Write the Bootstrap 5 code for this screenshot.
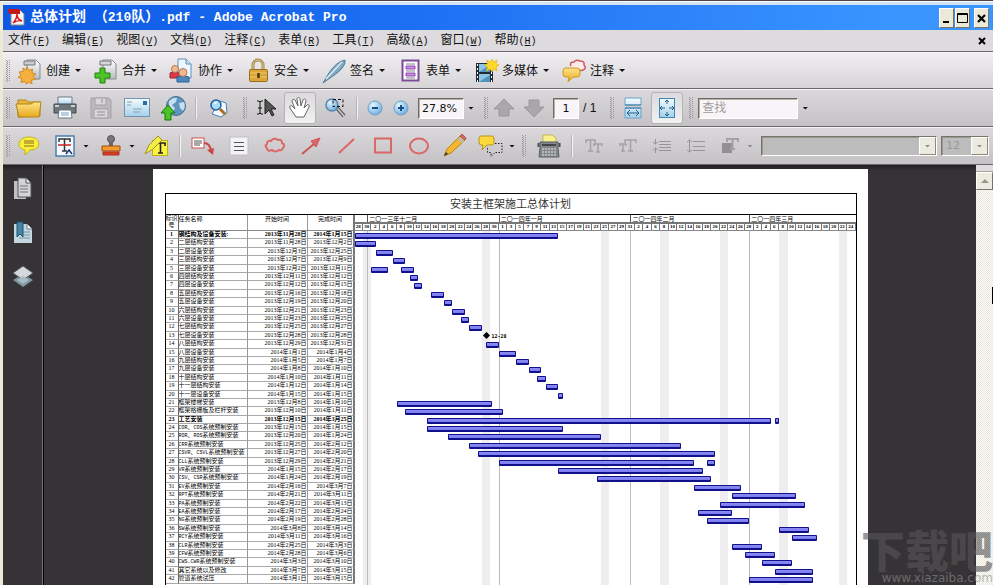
<!DOCTYPE html>
<html lang="zh-CN">
<head>
<meta charset="utf-8">
<meta name="viewport" content="width=device-width, initial-scale=1">
<title>总体计划 （210队）.pdf - Adobe Acrobat Pro</title>
<link href="https://cdn.jsdelivr.net/npm/bootstrap@5.3.0/dist/css/bootstrap.min.css" rel="stylesheet">
<style>
body{font:12px/16px "Liberation Sans","Noto Sans CJK SC",sans-serif;color:#111;background:#ece9d8;border-top:1px solid #4a4646}
button{font:inherit;color:inherit;background:none;border:0;padding:0}
svg{display:block;flex:none}
.frame{border-left:3px solid #ece9d8;border-top:1px solid #fff}
.frame>*{flex-shrink:0}
.titlebar{height:28px;border-top:3px solid #d5e3f6;background:linear-gradient(90deg,#0c58e4,#1f72f4 45%,#3a95ff 90%) padding-box;color:#fff;font:bold 13px/25px "Liberation Mono","Noto Sans CJK SC",monospace}
.titlebar h1{font:inherit;margin:0}
.zh{font-size:14px}
.winbtn{width:15px;height:20px;background:#ece9d8;border:1px solid;border-color:#fff #77745f #77745f #fff;display:grid;place-items:center}
.winbtn-pair{gap:1px}
.menus{height:22px;background:#dddbde;border-bottom:1px solid #6a686a;padding:0 5px}
.menus .hot{font:10px/16px "Liberation Mono",monospace}
.tb{background:linear-gradient(#dad8da,#c4c2c5);border-top:1px solid #f6f5f6;border-bottom:1px solid #69676a;height:38px;display:flex;align-items:center}
.tb-light{background:linear-gradient(#f0eef0,#d6d4d7);height:37px}
.tb>*{flex:none}
.grip{width:8px;height:22px;background:repeating-linear-gradient(#98969a 0 1px,transparent 1px 2px) 3px 0/1px 100% no-repeat,repeating-linear-gradient(transparent 0 1px,#98969a 1px 2px) 4px 0/1px 100% no-repeat,repeating-linear-gradient(#98969a 0 1px,transparent 1px 2px) 6px 0/1px 100% no-repeat}
.grip-mid{margin-left:3px}
.div-line{width:10px;height:22px;background:linear-gradient(90deg,#f4f3f4,#f4f3f4) 5px 0/1px 100% no-repeat,linear-gradient(90deg,#b5b3b6,#b5b3b6) 4px 0/1px 100% no-repeat}
.tasks{padding-right:12px}
.tasks .grip{margin-right:6px}
.task{display:flex;align-items:center;margin-right:12px}
.task span{margin:0 5px 0 3px}
.tool{width:36px;height:32px;display:grid;place-items:center}
.tool-sm{width:26px}.tool-md{width:32px}.tool-lg{width:34px}.tool-nav{width:30px}
.pressed{background:linear-gradient(#dcdadc,#f2f1f2);border:1px solid #b4b2b5;border-radius:3px}
.car{width:6px;height:3px;background:#111;clip-path:polygon(0 0,100% 0,50% 100%)}
.sunk{background:#f7f5f8;border:1px solid;border-color:#6d6a60 #fff #fff #6d6a60;box-shadow:inset 1px 1px #b5b3ac;height:21px;border-radius:0;padding:0 3px;font:12px/18px "DejaVu Sans","Noto Sans CJK SC",sans-serif;color:#111}
.zoombox{width:46px;font-size:11px}.pagebox{width:26px;text-align:center;font-size:11px}.findbox{width:100px}
.findbox::placeholder{color:#9f9c98;opacity:1}
.combo{height:20px;display:flex;background:#bdbcbd;border:1px solid;border-color:#77756a #fff #fff #77756a;box-shadow:inset 1px 1px #99978f}
.combo select{appearance:none;background:none;border:0;flex:1;min-width:0;color:#999;font:11px/18px "DejaVu Sans",sans-serif;padding:0 4px;opacity:1}
.combo-arrow{width:17px;background:#ecebdf;border:1px solid;border-color:#fff #8d8b80 #8d8b80 #fff;display:grid;place-items:center}
.combo-font{flex:1 0 0}
.combo-size{width:48px}
.dim{background:#8f8d88}
.work{background:linear-gradient(#211f21,#363336 6px);min-height:0}
.frame>.work{flex:1 1 0}
.rail{width:41px;border-right:1px solid #000;box-shadow:inset -1px 0 #777477;padding-top:12px;gap:20px}
.rail button{width:24px;height:24px;display:grid;place-items:center}
.paper{max-width:715px;margin-top:4px;background:#fff;padding:24px 11px 0 12px}
.track{width:17px;background:conic-gradient(#e6e4d6 25%,#fff 0 50%,#e6e4d6 0 75%,#fff 0) 0 0/2px 2px}
.track-split{height:7px;background:#dedcdf;border-bottom:1px solid #a5a29a}
.track-up{height:18px;background:#ecebdf;border:1px solid;border-color:#fff #77756a #77756a #fff;display:grid;place-items:center}
.plan{display:block;border:1px solid #000;font:6px/8px "Liberation Serif","Noto Sans CJK SC",serif;color:#000}
.plan caption{display:block;padding:0;color:#333;text-align:center;font-size:11px;line-height:20px;border-bottom:1px solid #000}
.plan thead,.plan tbody{display:block;border:0}
.plan tr{display:grid;grid-template-columns:13px 69px 60px 47px minmax(0,1fr);border:0}
.plan th,.plan td{border:0;font-weight:inherit;overflow:hidden;white-space:nowrap;padding:0}
.plan .c-id,.plan .c-name,.plan .c-date{border-right:1px solid #999}
.plan .c-id{border-right-color:#666;text-align:center}
.plan .c-end{border-right:2px solid #777;text-align:right}
.plan .c-date{text-align:right}
.plan thead tr{height:16px}
.plan thead .c-id{white-space:normal;line-height:7px}
.plan thead .c-date,.plan thead .c-end{text-align:center}
.plan thead th{border-bottom:1px solid #888}
.plan tbody{display:grid;grid-template-rows:repeat(43,minmax(0,1fr));height:361px;position:relative}
.plan tbody td:not(.c-bar){border-bottom:1px solid #aaa;line-height:7px}
.plan .summary{font-weight:bold}
.lat{font:5px/7px "Liberation Mono",monospace}
.c-bar{position:relative}
.months{display:flex;height:7px;line-height:8px}
.months span{border-left:1px solid #555;padding-left:1px;text-align:left;overflow:hidden}
.months span:first-child{border:0}
.days{display:grid;grid-template-columns:repeat(59,minmax(0,1fr));height:9px;background:#777;padding:2px 0 1px;line-height:6px;font-size:5px;text-align:center;font-weight:bold}
.days span{background:#fff;border-right:1px solid #777;overflow:hidden}
.gbar{position:absolute;top:2px;height:6px;background:linear-gradient(#8c8cf4,#7c7cf0);border:1px solid #10108a;border-bottom-width:2px;border-radius:1px}
.stone{position:absolute;top:1px;width:5px;height:5px;background:#000;transform:rotate(45deg)}
.stone-label{position:absolute;top:0;padding-left:8px;font:bold 5px/8px "DejaVu Sans Mono",monospace}
.plan .shade{display:block;position:absolute;inset:0 0 0 189px}
.shade td{display:block;height:100%}
.shade i{position:absolute;top:0;bottom:0;background:#efedf0}
.shade b{position:absolute;top:0;bottom:0;width:1px;background:#bbb}
.stamp{position:absolute;right:0;bottom:0;color:#8f8f8f;opacity:.6;pointer-events:none;text-align:right;white-space:nowrap}
.stamp strong{display:block;font:900 44px/44px "Noto Sans CJK SC",sans-serif;color:#575557}
.stamp small{display:block;font:12px/14px "DejaVu Sans",sans-serif}
.beam{position:absolute;right:0;top:287px;width:1px;height:17px;background:#000}
</style>
<script src="https://cdn.jsdelivr.net/npm/bootstrap@5.3.0/dist/js/bootstrap.bundle.min.js"></script>
</head>
<body class="vh-100 overflow-hidden">
<svg width="0" height="0" class="position-absolute" aria-hidden="true"><defs>
<linearGradient id="gold" x2="0" y2="1"><stop stop-color="#ffe58a"/><stop offset="1" stop-color="#e8a91e"/></linearGradient>
<linearGradient id="blue" x2="0" y2="1"><stop stop-color="#f4fbff"/><stop offset="1" stop-color="#a4d0ea"/></linearGradient>
<linearGradient id="grey" x2="0" y2="1"><stop stop-color="#fff"/><stop offset="1" stop-color="#b9bcc0"/></linearGradient>
<radialGradient id="ball" cx=".35" cy=".3" r=".8"><stop stop-color="#e4f6ff"/><stop offset="1" stop-color="#64a8dc"/></radialGradient>
</defs></svg>
<div class="frame d-flex flex-column h-100">
<header class="titlebar d-flex align-items-center ps-1 pe-1">
<svg width="19" height="19" viewBox="0 0 19 19" class="me-1"><path d="M4 2h9l4 4v11H4z" fill="#f6f6f6" stroke="#888"/><path d="M1 1h12v5H3L1 4z" fill="#c21a1a"/><path d="M6 15c3-3 4-6 4-9 0 4 2 6 5 7-3-1-6 0-9 2z" fill="none" stroke="#d11" stroke-width="1.4"/></svg>
<h1 class="flex-grow-1 text-nowrap"><span class="zh">总体计划</span> <span class="zh">（</span>210<span class="zh">队）</span>.pdf - Adobe Acrobat Pro</h1>
<div class="winbtn-pair d-flex"><button class="winbtn" aria-label="最小化"><svg width="13" height="16"><path d="M3 12h6" stroke="#000" stroke-width="2"/></svg></button>
<button class="winbtn" aria-label="最大化"><svg width="13" height="16"><path d="M1.500 3.500h10v9h-10zM1.500 4.500h10" fill="none" stroke="#000"/></svg></button></div>
<button class="winbtn ms-1" aria-label="关闭"><svg width="13" height="16"><path d="M3 5l7 7M10 5l-7 7" stroke="#000" stroke-width="2.200"/></svg></button>
</header>
<nav class="menus d-flex align-items-center" id="menus" aria-label="菜单">
<button class="ms-auto order-last" aria-label="关闭文档"><svg width="11" height="10"><path d="M2 2l6 6M8 2l-6 6" stroke="#000" stroke-width="2"/></svg></button>
</nav>
<div class="tb tb-light tasks" role="toolbar" aria-label="任务">
<i class="grip"></i>
<button class="task"><svg width="26" height="26" viewBox="0 0 26 26"><path d="M10 2h9l4 4v15H10z" fill="url(#grey)" stroke="#8b8b8b"/><path d="M7 3h11v4H7z" fill="#c9ccd0" stroke="#777"/><path d="M10 9l2 3.500 3.500-1.500-.5 4 4 1-3 2.500 2.500 3-4 .5.500 4-3.500-2-2 3-1.500-3.500-4 1 1-4-4-1 3-2.500L2 14l4-.5L6 10l3 2z" fill="#f6b040" stroke="#d08a24"/></svg><span>创建</span><i class="car"></i></button>
<button class="task"><svg width="26" height="26" viewBox="0 0 26 26"><path d="M10 2h9l4 4v15H10z" fill="url(#grey)" stroke="#8b8b8b"/><path d="M7 3h11v4H7z" fill="#d4d6d9" stroke="#777"/><path d="M7 10h5v5h5v5h-5v5H7v-5H2v-5h5z" fill="#4cc328" stroke="#23820f"/></svg><span>合并</span><i class="car"></i></button>
<button class="task"><svg width="26" height="26" viewBox="0 0 26 26"><path d="M9 1h8l5 5v14H9z" fill="#eef7ff" stroke="#5e8fb9"/><path d="M17 1v5h5" fill="#c5e0f5" stroke="#5e8fb9"/><path d="M1 20v-5q4-3 9 0v5z" fill="#d83a4a" stroke="#a92030"/><circle cx="6" cy="11" r="3.500" fill="#f0bb94" stroke="#b27550"/><path d="M8 24v-5q6-3 12 0v5z" fill="#4b86bf" stroke="#2a5f98"/><circle cx="14" cy="14.500" r="4" fill="#f0bb94" stroke="#b27550"/></svg><span>协作</span><i class="car"></i></button>
<button class="task"><svg width="26" height="26" viewBox="0 0 26 26"><path d="M8 12V7a5 5 0 0110 0v5" fill="none" stroke="#a18a4a" stroke-width="3"/><path d="M8 12V7a5 5 0 0110 0v5" fill="none" stroke="#e0cc88"/><rect x="4.500" y="11.500" width="18" height="12" rx="1" fill="#dba53a" stroke="#94701c"/><path d="M5 15h17M5 19h17" stroke="#efc86a"/><path d="M13.500 15v5" stroke="#4b390c" stroke-width="2.500"/></svg><span>安全</span><i class="car"></i></button>
<button class="task"><svg width="26" height="26" viewBox="0 0 26 26"><path d="M2 25L8 15Q15 4 24 2q1 6-8 13l-7 5z" fill="#7faac4" stroke="#4d7994"/><path d="M5 21L21 4" stroke="#dceaf3" stroke-width="1.500"/></svg><span>签名</span><i class="car"></i></button>
<button class="task"><svg width="26" height="26" viewBox="0 0 26 26"><rect x="5.500" y="2.500" width="16" height="20" fill="#fff" stroke="#7c4c98" stroke-width="2"/><path d="M9 6h9M9 13h9M9 20h9" stroke="#888"/><path d="M9 8h9v3H9zM9 15h9v3H9z" fill="#c78be0" stroke="#8f4fb0"/></svg><span>表单</span><i class="car"></i></button>
<button class="task"><svg width="26" height="26" viewBox="0 0 26 26"><path d="M3 5h17v19H3z" fill="#222b33"/><path d="M6 6h11v8H6zM6 16h11v8H6z" fill="#8cc6e4"/><path d="M6 14l11-7v7zM6 24l11-7v7z" fill="#4f94be"/><path d="M4.500 6v18M18.500 6v18" stroke="#fff" stroke-dasharray="2 2"/><path d="M19 1l1.500 3L24 2l-1 4 3 1-3 2 1 4-3.500-2L19 14l-2-3-3.500 2 1-4-3-2 3-1-1-4 3.500 2z" fill="#ffd92a" stroke="#e4b410" stroke-width=".7"/></svg><span>多媒体</span><i class="car"></i></button>
<button class="task"><svg width="26" height="26" viewBox="0 0 26 26"><path d="M10 8q-2-4 3-4 2-3 6-1 5 0 4 4 3 3-1 5l-5 1" fill="#fbeceb" stroke="#d05858" stroke-width="1.500"/><path d="M5 10h11q3 0 3 3v3q0 3-3 3h-4l-5 5 1-5H5q-3 0-3-3v-3q0-3 3-3z" fill="url(#gold)" stroke="#c99a1c"/></svg><span>注释</span><i class="car"></i></button>
</div>
<div class="tb" role="toolbar" aria-label="文件">
<i class="grip"></i>
<button class="tool" aria-label="打开"><svg width="28" height="24" viewBox="0 0 28 24"><path d="M3 21V4h8l2 2h12v14z" fill="#e9b53a" stroke="#b38419"/><path d="M1 8h15l3-2h7l-2 15H4z" fill="url(#gold)" stroke="#b38419"/></svg></button>
<button class="tool" aria-label="打印"><svg width="26" height="26" viewBox="0 0 26 26"><path d="M6 2h14v9H6z" fill="url(#blue)" stroke="#667a88"/><path d="M2 9h22v9H2z" fill="#6c7478" stroke="#42494d"/><path d="M3 10h4v2H3zM19 10h4v2h-4z" fill="#c9d0d3"/><path d="M7 15h12l1 8H6z" fill="#fff" stroke="#697884"/><path d="M9 18h8M9 20h8" stroke="#74a1c1"/></svg></button>
<button class="tool" aria-label="保存" disabled><svg width="24" height="24" viewBox="0 0 24 24"><path d="M2 2h18l2 2v18H2z" fill="#bbb9bc" stroke="#a4a2a5"/><path d="M6 2h11v7H6zM5 13h14v9H5z" fill="#d8d6d9" stroke="#a3a1a4"/><path d="M13 3v4M8 16h8M8 19h8" stroke="#a8a6aa" stroke-width="1.500"/></svg></button>
<button class="tool" aria-label="电子邮件"><svg width="28" height="22" viewBox="0 0 28 22"><rect x="1.500" y="1.500" width="25" height="18" fill="url(#blue)" stroke="#7594ab"/><path d="M20 4h4v4h-4z" fill="#286fa6"/><path d="M4 5h5M4 8h4M10 12h9M10 15h7" stroke="#8ba0b0"/></svg></button>
<button class="tool" aria-label="上传"><svg width="28" height="26" viewBox="0 0 28 26"><circle cx="17" cy="11" r="9.500" fill="#5e94bd" stroke="#3f6f96"/><path d="M10 6q4-4 8-3l-1 4-4 3 3 3-2 4q-5-4-4-11zM20 8l5-1q2 5-1 9l-3-3z" fill="#c5dfee"/><path d="M9 10l7 8h-4v7H6v-7H2z" fill="#4cc328" stroke="#18760b"/></svg></button>
<i class="div-line"></i>
<button class="tool" aria-label="搜索"><svg width="22" height="22" viewBox="0 0 22 22"><path d="M12 4l6 2 1 10-6 4-9-3z" fill="#f5faff" stroke="#4b7fae"/><circle cx="8" cy="8" r="5" fill="#a4dcf8" stroke="#245f9e" stroke-width="1.500"/><path d="M12 12l5 5" stroke="#a86f22" stroke-width="3"/><path d="M6 7l3-2" stroke="#fff" stroke-width="1.500"/></svg></button>
<i class="grip grip-mid"></i>
<button class="tool" aria-label="选择"><svg width="24" height="22" viewBox="0 0 24 22"><path d="M3 4h2l1 1 1-1h2M3 17h2l1-1 1 1h2M6 5v11M4 11h4" fill="none" stroke="#111"/><path d="M11 2v15l4-4 3 6 2-1-3-6h5z" fill="#555" stroke="#222"/></svg></button>
<button class="tool tool-md pressed" aria-label="手形工具"><svg width="24" height="24" viewBox="0 0 24 24"><path d="M8 21l-6-9c-1-2 1-3 2-2l3 3-3-8c0-2 2-2 3-1l3 6-1-7c0-2 3-2 3 0l1 7 2-6c1-2 3-1 3 1l-2 7 3-3c1-1 3 0 2 2l-5 10z" fill="#fff" stroke="#666"/></svg></button>
<button class="tool tool-md ms-1" aria-label="选框缩放"><svg width="24" height="22" viewBox="0 0 24 22"><path d="M13 11l7 8" stroke="#5a5a5a" stroke-width="4"/><path d="M13 11l7 8" stroke="#ccc" stroke-width="1.500"/><circle cx="8" cy="8" r="6" fill="url(#ball)" stroke="#5585ad" stroke-width="1.500"/><path d="M9 2.500h10v7H9z" fill="none" stroke="#111" stroke-dasharray="3 2"/></svg></button>
<i class="div-line"></i>
<button class="tool tool-sm" aria-label="缩小"><svg width="18" height="18"><circle cx="9" cy="9" r="7" fill="url(#ball)" stroke="#6a9fca"/><path d="M6 9h6" stroke="#174f86" stroke-width="2"/></svg></button>
<button class="tool tool-sm" aria-label="放大"><svg width="18" height="18"><circle cx="9" cy="9" r="7" fill="url(#ball)" stroke="#6a9fca"/><path d="M6 9h6M9 6v6" stroke="#174f86" stroke-width="2"/></svg></button>
<input class="sunk zoombox ms-1" aria-label="缩放比例" value="27.8%"><i class="car ms-1 me-1"></i>
<i class="grip grip-mid"></i>
<button class="tool tool-nav" aria-label="上一页" disabled><svg width="22" height="20"><path d="M11 1l10 10h-5v7H6v-7H1z" fill="#a9a7aa" stroke="#9a989b"/></svg></button>
<button class="tool tool-nav" aria-label="下一页" disabled><svg width="22" height="20"><path d="M11 19L1 9h5V2h10v7h5z" fill="#a9a7aa" stroke="#9a989b"/></svg></button>
<input class="sunk pagebox ms-1" aria-label="页码" value="1"><span class="ms-1 me-2">/ 1</span>
<i class="grip grip-mid"></i>
<button class="tool" aria-label="适合宽度"><svg width="20" height="24" viewBox="0 0 20 24"><path d="M2 2h16v7H2zM2 12h16v10H2z" fill="url(#blue)" stroke="#68a4c8"/><path d="M2 9h16M2 12h16" stroke="#3c7ba4"/><path d="M4 17h12M7 14l-3 3 3 3M13 14l3 3-3 3" fill="none" stroke="#245f86"/></svg></button>
<button class="tool tool-md pressed" aria-label="适合页面"><svg width="18" height="22" viewBox="0 0 18 22"><rect x="1.500" y="1.500" width="15" height="19" fill="url(#blue)" stroke="#3f86b4"/><path d="M9 3v4M9 15v4M2 11h5M11 11h5M7 5l2-2 2 2M7 17l2 2 2-2M4 9l-2 2 2 2M14 9l2 2-2 2" fill="none" stroke="#245f86"/></svg></button>
<i class="grip grip-mid"></i>
<input class="sunk findbox ms-1" type="search" aria-label="查找" placeholder="查找"><i class="car ms-1"></i>
</div>
<div class="tb" role="toolbar" aria-label="注释与打字机">
<i class="grip"></i>
<button class="tool" aria-label="附注"><svg width="24" height="24" viewBox="0 0 24 24"><path d="M12 3c13 0 13 13 1 13l-5 5v-5C-2 14 1 3 12 3z" fill="#fbed3c" stroke="#c3b11a"/><path d="M7 7h10M7 9h10M7 12h10" stroke="#8b6e22"/></svg></button>
<button class="tool" aria-label="文本编辑"><svg width="22" height="24" viewBox="0 0 22 24"><rect x="2" y="2" width="18" height="20" fill="#f4faff" stroke="#4b7fae" stroke-width="1.500"/><path d="M5 8V5h11v3M10.500 5v12M8 17h5" fill="none" stroke="#333" stroke-width="1.500"/><path d="M4 11h13" stroke="#c22" stroke-width="1.500"/><path d="M12 20l3-4 3 4" fill="none" stroke="#237" stroke-width="1.500"/></svg></button><i class="car"></i>
<button class="tool ms-1" aria-label="图章"><svg width="24" height="24" viewBox="0 0 24 24"><circle cx="12" cy="5" r="3.500" fill="#777" stroke="#555"/><path d="M10 8h4v5h-4z" fill="#666"/><path d="M3 12h18v5H3z" fill="#f09a30" stroke="#a44a10"/><path d="M4 18h16v3H4z" fill="#da4018" stroke="#a33"/></svg></button><i class="car"></i>
<button class="tool ms-1" aria-label="高亮"><svg width="26" height="24" viewBox="0 0 26 24"><rect x="8.500" y="6.500" width="15" height="15" fill="#fdf440" stroke="#bcae1c"/><path d="M12 12V9h9v3M16.500 9v10M14 19h5" fill="none" stroke="#222" stroke-width="1.600"/><path d="M1 20l4-9 9-9 4 4-9 9z" fill="#f1ec46" stroke="#9e9425"/></svg></button>
<i class="div-line"></i>
<button class="tool" aria-label="标注"><svg width="26" height="22" viewBox="0 0 26 22"><rect x="2" y="3" width="12" height="10" fill="#fff" stroke="#c55"/><path d="M4 6h8M4 8h8M4 10h6" stroke="#555"/><path d="M14 8q6 0 7 8" fill="none" stroke="#c44" stroke-width="2"/><path d="M17 15l7-2-1 7z" fill="#c44"/></svg></button>
<button class="tool" aria-label="文本框"><svg width="22" height="20"><rect x="2" y="1" width="18" height="18" fill="#f3f3f5" stroke="#c1bfc2"/><path d="M6 6.500h10M6 10.500h10M6 14.500h10" stroke="#555"/></svg></button>
<button class="tool" aria-label="云状线"><svg width="24" height="20"><path d="M4 8q0-4 4-3 3-4 7-1 4-1 4 3 4 2 1 5-1 3-4 2-4 3-7 0-5 2-5-2-3-2 0-4z" fill="none" stroke="#d66" stroke-width="2"/></svg></button>
<button class="tool" aria-label="箭头"><svg width="22" height="20"><path d="M2 18L15 7" stroke="#c55" stroke-width="2"/><path d="M11 5l9-3-4 9z" fill="#d66" stroke="#c55"/></svg></button>
<button class="tool" aria-label="线条"><svg width="20" height="20"><path d="M2 17L17 3" stroke="#d66" stroke-width="2"/></svg></button>
<button class="tool" aria-label="矩形"><svg width="22" height="20"><rect x="3" y="2.500" width="16" height="14" fill="none" stroke="#d66" stroke-width="2"/></svg></button>
<button class="tool" aria-label="椭圆"><svg width="22" height="20"><ellipse cx="11" cy="10" rx="9" ry="7.500" fill="none" stroke="#d66" stroke-width="2"/></svg></button>
<button class="tool" aria-label="铅笔"><svg width="26" height="24" viewBox="0 0 26 24"><path d="M2 22l3-7L18 2l5 4L9 19z" fill="#f4b62a" stroke="#b98418"/><path d="M18 2l5 4 1-2-4-4z" fill="#d66" stroke="#a55"/><path d="M15 5l5 4 2-2-4-4z" fill="#b9bcc0"/><path d="M2 22l2-4 2 2z" fill="#333"/></svg></button>
<button class="tool" aria-label="显示注释"><svg width="26" height="24" viewBox="0 0 26 24"><path d="M3 2h11q2 0 2 3v4q0 2-3 2h-4l-5 5 1-5H3q-2 0-2-3V5q0-3 2-3z" fill="#fbd93a" stroke="#b8951a"/><path d="M17 9.500h7v9h-7l-4 4v-4H9.500v-6" fill="none" stroke="#222" stroke-dasharray="1.500 1.500"/></svg></button><i class="car"></i>
<i class="grip grip-mid ms-1 me-1"></i>
<button class="tool" aria-label="打字机"><svg width="26" height="26" viewBox="0 0 26 26"><path d="M7 2h9l4 3v6H7z" fill="#f8f08a" stroke="#c3b84a"/><path d="M4 9h18v6l1 9H3l1-9z" fill="#82888c" stroke="#5a5f62"/><path d="M2.500 10v4M23.500 10v4" stroke="#4a4f52" stroke-width="2"/><path d="M6 12h14" stroke="#444" stroke-width="2"/><path d="M6 16h15M6 19h15M6 22h15" stroke="#e8eaeb" stroke-dasharray="2 1"/></svg></button>
<i class="div-line"></i>
<button class="tool tool-lg" aria-label="减小文本" disabled><svg width="20" height="16" fill="none" stroke="#a3a1a4" stroke-width="1.500"><path d="M2 5V2h9v3M6.500 2v11M4 13h5M10 8V6h8v2M14 6v8M12 14h4"/></svg></button>
<button class="tool tool-lg" aria-label="增大文本" disabled><svg width="20" height="16" fill="none" stroke="#a3a1a4" stroke-width="1.500"><path d="M2 8V6h6v2M5 6v7M3 13h4M7 5V2h11v3M12.500 2v11M10 13h5"/></svg></button>
<button class="tool tool-lg" aria-label="减小行距" disabled><svg width="20" height="16" fill="none" stroke="#969498"><path d="M7 3.500h12M7 6.500h12M7 9.500h12M7 12.500h12M3.500 1v5M3.500 15v-5M1 4l2.500 2L6 4M1 12l2.500-2L6 12"/></svg></button>
<button class="tool tool-lg" aria-label="增大行距" disabled><svg width="20" height="16" fill="none" stroke="#969498"><path d="M7 3.500h12M7 8.500h12M7 12.500h12M3.500 2v12M1 4l2.500-2L6 4M1 12l2.500 2L6 12"/></svg></button>
<button class="tool tool-lg" aria-label="文本颜色" disabled><svg width="20" height="18"><path d="M2 6h10v10H2z" fill="#929094"/><path d="M7 5V2h11v3M12.500 2v10M10 12h5" fill="none" stroke="#a3a1a4" stroke-width="2"/></svg></button><i class="car dim"></i>
<div class="combo combo-font ms-2"><select disabled aria-label="字体"><option></option></select><span class="combo-arrow"><i class="car dim"></i></span></div>
<div class="combo combo-size ms-1 me-1"><select disabled aria-label="字号"><option>12</option></select><span class="combo-arrow"><i class="car dim"></i></span></div>
</div>
<main class="work d-flex overflow-hidden position-relative">
<nav class="rail d-flex flex-column align-items-center flex-shrink-0" aria-label="导览">
<button aria-label="页面"><svg width="20" height="24" viewBox="0 0 20 24"><path d="M1 4h12v18H1z" fill="#c2c0c3"/><path d="M5 1h8l5 5v14H5z" fill="#d5d3d6" stroke="#555"/><path d="M13 1v5h5" fill="#eee" stroke="#555"/><path d="M7 9h8M7 12h8M7 15h8" stroke="#777"/></svg></button>
<button aria-label="书签"><svg width="20" height="24" viewBox="0 0 20 24"><path d="M1 3h13l5 5v14H1z" fill="#c3d7e0"/><path d="M14 3v5h5" fill="#fff" stroke="#678"/><path d="M10 11h7M10 14h7M6 17h11" stroke="#7795a5"/><path d="M4 1h6v15l-3-3-3 3z" fill="#4684a4" stroke="#1f536f"/></svg></button>
<button aria-label="图层"><svg width="22" height="24" viewBox="0 0 22 24"><path d="M11 9l10 6-10 7-10-7z" fill="#7f97a0"/><path d="M11 1l10 7-10 7L1 8z" fill="#d3d8dc" stroke="#555"/><path d="M11 11l6 4-6 4-6-4z" fill="#a8bac1"/></svg></button>
</nav>
<div class="flex-grow-1 overflow-hidden d-flex justify-content-center">
<article class="paper w-100">
<table class="plan">
<caption>安装主框架施工总体计划</caption>
<thead><tr><th class="c-id">标识号</th><th class="c-name">任务名称</th><th class="c-date">开始时间</th><th class="c-end">完成时间</th><th><div class="months" id="months"></div><div class="days" id="days"></div></th></tr></thead>
<tbody id="rows"></tbody>
</table>
</article>
</div>
<div class="track flex-shrink-0"><div class="track-split"></div><button class="track-up w-100" aria-label="向上滚动"><svg width="8" height="5"><path d="M4 0l4 4H0z" fill="#99978c"/></svg></button></div>
<div class="stamp"><strong>下载吧</strong><small>www.xiazaiba.com</small></div>
</main>
</div>
<i class="beam"></i>
<script>
const DAYS = 118, pct = d => (d / DAYS * 100).toFixed(3) + '%';
const menus = [['文件','F'],['编辑','E'],['视图','V'],['文档','D'],['注释','C'],['表单','R'],['工具','T'],['高级','A'],['窗口','W'],['帮助','H']];
document.getElementById('menus').insertAdjacentHTML('afterbegin', menus.map(([t, k]) =>
  `<button class="text-nowrap pe-2 me-1">${t}<span class="hot">(<u>${k}</u>)</span></button>`).join(''));

// name, start, finish, bars as [from, to] in days after 2013-11-28
const tasks = [
['钢结构及设备安装:','2013-11-28','2014-1-15',[0,48]],['二层结构安装','2013-11-28','2013-12-2',[0,5]],
['二层设备安装','2013-12-3','2013-12-25',[5,9]],['三层结构安装','2013-12-7','2013-12-9',[9,12]],
['三层设备安装','2013-12-2','2013-12-11',[4,8],[11,14]],['四层结构安装','2013-12-11','2013-12-12',[13,15]],
['四层设备安装','2013-12-12','2013-12-15',[14,16]],['五层结构安装','2013-12-16','2013-12-18',[18,21]],
['五层设备安装','2013-12-19','2013-12-20',[21,23]],['六层结构安装','2013-12-21','2013-12-23',[23,26]],
['六层设备安装','2013-12-23','2013-12-25',[25,27]],['七层结构安装','2013-12-25','2013-12-27',[27,30]],
['七层设备安装','2013-12-28','2013-12-28'],['八层结构安装','2013-12-29','2013-12-31',[31,34]],
['八层设备安装','2014-1-1','2014-1-4',[34,38]],['九层结构安装','2014-1-5','2014-1-7',[38,41]],
['九层设备安装','2014-1-8','2014-1-10',[41,44]],['十层结构安装','2014-1-10','2014-1-11',[43,45]],
['十一层结构安装','2014-1-12','2014-1-14',[45,48]],['十一层设备安装','2014-1-15','2014-1-15',[48,49]],
['框架楼梯安装','2013-12-8','2014-1-10',[10,32.5]],['框架格栅板及栏杆安装','2013-12-10','2014-1-11',[12,35]],
['工艺安装','2013-12-15','2014-3-25',[17,98],[99,100]],['COR、COS系统预制安装','2013-12-15','2014-1-15',[17,49]],
['ROR、ROS系统预制安装','2013-12-20','2014-1-24',[22,58]],['CRR系统预制安装','2013-12-25','2014-2-12',[27,77]],
['CSVR、CSVL系统预制安装','2013-12-27','2014-2-20',[29,85]],['CLL系统预制安装','2013-12-29','2014-2-21',[34,80],[83,85]],
['VR系统预制安装','2014-1-15','2014-2-17',[48,82]],['CSV、CSR系统预制安装','2014-1-24','2014-2-19',[57,84]],
['EV系统预制安装','2014-2-16','2014-3-7',[80,91]],['RPT系统预制安装','2014-2-21','2014-3-11',[89,104]],
['PA系统预制安装','2014-2-22','2014-3-13',[86,106]],['EA系统预制安装','2014-2-17','2014-2-24',[81,89]],
['NG系统预制安装','2014-2-19','2014-2-28',[83,93]],['SW系统预制安装','2014-3-8','2014-3-14',[100,107]],
['RCY系统预制安装','2014-3-11','2014-3-16',[103,109]],['CLR系统预制安装','2014-2-25','2014-3-3',[89,96]],
['CFW系统预制安装','2014-2-28','2014-3-6',[92,99]],['CWS.CWR系统预制安装','2014-3-3','2014-3-10',[96,103]],
['其它系统以及修改','2014-3-7','2014-3-15',[99,108]],['管道系统试压','2014-3-1','2014-3-15',[93,108]]
];
const date = s => s.replace(/(\d+)-(\d+)-(\d+)/, '$1年$2月$3日');
const shade = [2,30,58,72,86,100,114].map(d => `<i style="left:${pct(d)};width:${pct(2)}"></i>`).join('') +
  [3,34,65,93].map(d => `<b style="left:${pct(d)}"></b>`).join('');
const rows = tasks.map(([n, s, e, ...bars], i) => {
  let chart = bars.map(([a, b]) => `<div class="gbar" style="left:${pct(a)};width:${pct(b - a)}"></div>`).join('');
  if (i === 12) chart = `<div class="stone" style="left:${pct(30.4)}"></div><span class="stone-label" style="left:${pct(30.4)}">12-28</span>`;
  return `<tr class="${i === 0 || i === 22 ? 'summary' : ''}"><td class="c-id">${i + 1}</td><td class="c-name">${n.replace(/[A-Z.]+/g, '<span class="lat">$&</span>')}</td><td class="c-date">${date(s)}</td><td class="c-end">${date(e)}</td><td class="c-bar">${chart}</td></tr>`;
});
document.getElementById('rows').innerHTML = `<tr class="shade" aria-hidden="true"><td class="c-bar">${shade}</td></tr>` + rows.join('');

const months = [['',3],['二〇一三年十二月',31],['二〇一四年一月',31],['二〇一四年二月',28],['二〇一四年三月',25]];
document.getElementById('months').innerHTML = months.map(([t, n]) => `<span style="width:${pct(n)}">${t}</span>`).join('');
const list = [];
for (let i = 0; i < 59; i++) list.push(new Date(Date.UTC(2013, 10, 28 + i * 2)).getUTCDate());
document.getElementById('days').innerHTML = list.map(d => `<span>${d}</span>`).join('');
</script>
</body>
</html>
